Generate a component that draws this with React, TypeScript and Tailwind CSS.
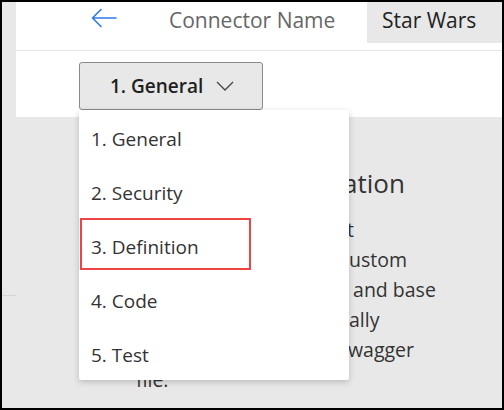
import { useState } from "react";

const steps = ["1. General", "2. Security", "3. Definition", "4. Code", "5. Test"];

// each row: part that sits under the open menu + visible tail
const infoLines: { head: string; tail: string; w: string }[] = [
  { head: "Here you define wha", tail: "t", w: "w-[211px]" },
  { head: "actions your c", tail: "ustom", w: "w-[213px]" },
  { head: "connector has,", tail: " and base", w: "w-[212px]" },
  { head: "them on a file manu", tail: "ally", w: "w-[213px]" },
  { head: "or from a S", tail: "wagger", w: "w-[212px]" },
];

const BackArrow = () => (
  <svg width="26" height="20" viewBox="0 0 26 20" fill="none">
    <path
      d="M10 1.5 L1.5 10 L10 18.5 M1.5 10 H25"
      stroke="#3079e8"
      strokeWidth="1.6"
      strokeLinecap="round"
      strokeLinejoin="round"
    />
  </svg>
);

const Chevron = () => (
  <svg width="18" height="10" viewBox="0 0 18 10" fill="none">
    <path d="M1 1 L9 9 L17 1" stroke="#444" strokeWidth="1.3" />
  </svg>
);

const App = () => {
  const [active] = useState(steps[0]);

  return (
    <div className="relative w-[504px] h-[410px] border-2 border-black bg-white flex overflow-hidden font-['Open_Sans','Liberation_Sans',sans-serif]">
      {/* left rail */}
      <div className="w-[14px] flex flex-col bg-[#e8e8e8]">
        <div className="h-[294px] border-b border-[#d4d4d4]" />
        <div className="flex-1" />
      </div>

      <div className="flex-1 flex flex-col">
        {/* header */}
        <div className="h-[49px] flex items-start border-b border-[#e6e6e6]">
          <div className="ml-[75px] mt-[6px]">
            <BackArrow />
          </div>
          <div className="ml-[52px] h-[41px] leading-[37px] text-[21px] text-[#666]">
            Connector Name
          </div>
          <div className="ml-auto w-[135px] h-[41px] leading-[37px] pl-[15px] text-[21px] text-[#222] bg-[#e8e8e8]">
            Star Wars
          </div>
        </div>

        {/* step picker row */}
        <div className="h-[66px] pl-[63px] pt-[11px]">
          <button className="w-[184px] h-[48px] flex items-center pl-[30px] gap-[13px] bg-[#e8e8e8] border border-[#8a8a8a] rounded-[3px] text-[19px] font-semibold text-[#1f1f1f]">
            <span>{active}</span>
            <Chevron />
          </button>
        </div>

        {/* page body */}
        <div className="flex-1 bg-[#e8e8e8] pl-[120px] pt-[49px]">
          <div className="flex text-[26px] leading-[34px] text-[#333] whitespace-nowrap">
            <span className="w-[207px] text-right">Step Inform</span>
            <span>ation</span>
          </div>
          <div className="mt-[15px] text-[19.5px] leading-[30px] text-[#333]">
            {infoLines.map((l) => (
              <div key={l.tail} className="flex whitespace-pre">
                <span className={`${l.w} text-right`}>{l.head}</span>
                <span>{l.tail}</span>
              </div>
            ))}
            <div>file.</div>
          </div>
        </div>
      </div>

      {/* open dropdown */}
      <div className="absolute left-[77px] top-[108px] w-[270px] bg-white rounded-[2px] shadow-[0_2px_6px_rgba(0,0,0,0.2)]">
        {steps.map((s) => (
          <div key={s} className="h-[54px] flex items-center pl-[12px] pt-[4px] text-[19px] text-[#333]">
            {s}
          </div>
        ))}
        <div className="absolute left-[1px] top-[108px] w-[171px] h-[52px] border-2 border-[#f04444]" />
      </div>
    </div>
  );
};

export default App;
